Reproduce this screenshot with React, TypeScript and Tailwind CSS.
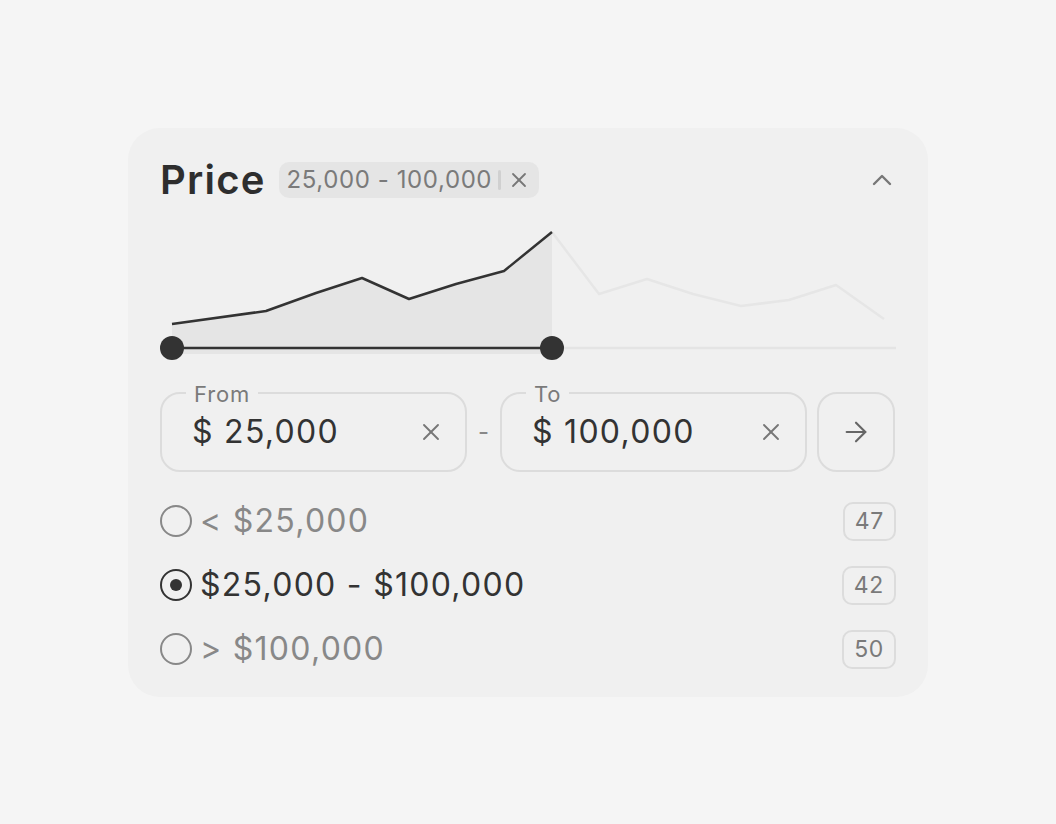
import { ChevronUp, X, ArrowRight } from "lucide-react";

const dark = [
  [12, 104],
  [106, 91],
  [156, 73],
  [202, 58],
  [249, 79],
  [296, 64],
  [344, 51],
  [392, 12],
];
const light = [
  [392, 12],
  [439, 74],
  [487, 59],
  [533, 74],
  [581, 86],
  [629, 80],
  [676, 65],
  [724, 99],
];

const pts = (p: number[][]) => p.map((q) => q.join(",")).join(" ");

function Chart() {
  return (
    <svg width="736" height="140" viewBox="0 0 736 140" className="block mt-5">
      <polygon points={`${pts(dark)} 392,134 12,134`} fill="#e5e5e5" />
      <polyline points={pts(light)} fill="none" stroke="#e6e6e6" strokeWidth="2.5" strokeLinejoin="round" />
      <polyline points={pts(dark)} fill="none" stroke="#333" strokeWidth="2.5" strokeLinejoin="round" />
      <line x1="12" y1="128" x2="736" y2="128" stroke="#e4e4e4" strokeWidth="2.5" />
      <line x1="12" y1="128" x2="392" y2="128" stroke="#333" strokeWidth="2.5" />
      <circle cx="12" cy="128" r="12" fill="#333" />
      <circle cx="392" cy="128" r="12" fill="#333" />
    </svg>
  );
}

function Field({ label, value }: { label: string; value: string }) {
  return (
    <div className="relative w-[307px] h-[80px] rounded-[20px] border-2 border-[#dcdcdc] flex items-center pl-[30px] pr-[20px]">
      <span className="absolute left-[24px] -top-[13px] px-2 bg-[#f0f0f0] text-[22px] leading-[26px] tracking-[0.04em] text-[#7a7a7a]">
        {label}
      </span>
      <span className="flex-1 text-[32px] tracking-[0.04em] text-[#333]">{value}</span>
      <X className="w-7 h-7 text-[#777]" strokeWidth={1.6} />
    </div>
  );
}

function Option({ label, count, checked }: { label: string; count: number; checked?: boolean }) {
  return (
    <div className="h-16 flex items-center">
      <span
        className={
          checked
            ? "w-8 h-8 rounded-full border-[2.5px] border-[#333] flex items-center justify-center"
            : "w-8 h-8 rounded-full border-[2.5px] border-[#888]"
        }
      >
        {checked ? <span className="w-3 h-3 rounded-full bg-[#333]" /> : null}
      </span>
      <span
        className={
          checked
            ? "ml-2 flex-1 text-[32px] tracking-[0.04em] text-[#333]"
            : "ml-2 flex-1 text-[32px] tracking-[0.04em] text-[#888]"
        }
      >
        {label}
      </span>
      <span className="h-[39px] px-[10px] rounded-[10px] border-2 border-[#dcdcdc] flex items-center text-[23px] tracking-[0.03em] text-[#7a7a7a]">
        {count}
      </span>
    </div>
  );
}

export default function App() {
  return (
    <div className="min-h-screen bg-[#f5f5f5] pt-[128px] font-['Inter',sans-serif]">
      <div className="mx-auto w-[800px] rounded-[32px] bg-[#f0f0f0] px-8 pt-8 pb-4">
        <div className="h-10 flex items-center">
          <span className="text-[40px] font-semibold tracking-[0.03em] text-[#2e2e2e] leading-none">Price</span>
          <span className="ml-[13px] h-9 rounded-[10px] bg-[#e5e5e5] px-2 flex items-center text-[24px] tracking-[0.025em] text-[#7a7a7a]">
            25,000 - 100,000
            <span className="mx-[6px] w-[3px] h-5 bg-[#d0d0d0] rounded" />
            <X className="w-6 h-6 text-[#777]" strokeWidth={1.8} />
          </span>
          <ChevronUp className="ml-auto -mr-[2px] w-8 h-8 text-[#777]" strokeWidth={1.8} />
        </div>
        <Chart />
        <div className="mt-8 flex items-center">
          <Field label="From" value="$ 25,000" />
          <span className="w-[33px] text-center text-[24px] text-[#888]">-</span>
          <Field label="To" value="$ 100,000" />
          <button className="ml-[10px] w-[78px] h-[80px] rounded-[20px] border-2 border-[#dcdcdc] flex items-center justify-center">
            <ArrowRight className="w-8 h-8 text-[#666]" strokeWidth={1.6} />
          </button>
        </div>
        <div className="mt-[17px]">
          <Option label="< $25,000" count={47} />
          <Option label="$25,000 - $100,000" count={42} checked />
          <Option label="> $100,000" count={50} />
        </div>
      </div>
    </div>
  );
}
